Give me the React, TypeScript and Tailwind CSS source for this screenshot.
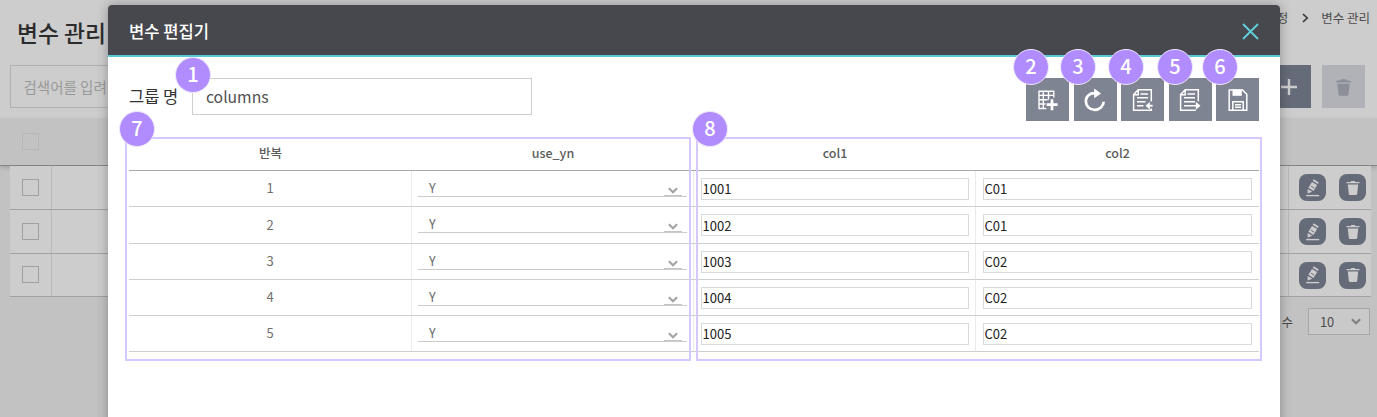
import React from "react";

const rows = [
  { n: 1, yn: "Y", col1: "1001", col2: "C01" },
  { n: 2, yn: "Y", col1: "1002", col2: "C01" },
  { n: 3, yn: "Y", col1: "1003", col2: "C02" },
  { n: 4, yn: "Y", col1: "1004", col2: "C02" },
  { n: 5, yn: "Y", col1: "1005", col2: "C02" },
];

function Badge({ n, className }: { n: number; className: string }) {
  return (
    <span
      className={
        "absolute flex h-9 w-9 items-center justify-center rounded-full border border-[#eee8ff] bg-[#b18cff] pb-[3px] text-[20px] font-medium leading-none text-white " +
        className
      }
    >
      {n}
    </span>
  );
}

function GridAddIcon() {
  return (
    <svg width="22" height="22" viewBox="0 0 22 22" fill="none" stroke="#fff" strokeWidth="1.4">
      <path d="M16.8 8.6V2.2H2v17.3h7.2M2 6.4h14.8M2 10.7h8.5M2 15h6.5M6.3 2.2v17.3M11.5 2.2v8.5" />
      <path d="M15 10.2v11M9.6 15.7H20.6" strokeWidth="2.7" />
    </svg>
  );
}

function ReloadIcon() {
  return (
    <svg width="24" height="26" viewBox="0 0 24 26" fill="none">
      <path d="M12.8 6.2C6.6 5.6 2.8 9.5 2.8 14.1c0 5 4 8.8 8.8 8.8 4.9 0 8.9-3.6 9.1-8.2" stroke="#fff" strokeWidth="2.7" />
      <path d="M11.2 1.4 18 6.6l-6.8 4.6z" fill="#fff" />
    </svg>
  );
}

function ImportIcon() {
  return (
    <svg width="22" height="24" viewBox="0 0 22 24" fill="none" stroke="#fff" strokeWidth="1.5">
      <path d="M19.3 13.5V1.8H6.2L1.6 6.6v15.6h17.7v-1.6M6.2 2v4.8H1.8M8.5 6h7.5M5 9.8h11M5 13.8h8.5M5 17.8h6.5" />
      <path d="M20.6 17.7h-4" strokeWidth="2" />
      <path d="M17.8 13.9v7.6l-4.3-3.8z" fill="#fff" stroke="none" />
    </svg>
  );
}

function ExportIcon() {
  return (
    <svg width="22" height="24" viewBox="0 0 22 24" fill="none" stroke="#fff" strokeWidth="1.5">
      <path d="M19.3 13.2V1.8H6.2L1.6 6.6v15.6h15.2M6.2 2v4.8H1.8M8.5 6h7.5M5 9.8h11M5 13.8h11M5 17.8h12" />
      <path d="M16.8 13.7v8l4.7-4z" fill="#fff" stroke="none" />
    </svg>
  );
}

function SaveIcon() {
  return (
    <svg width="20" height="24" viewBox="0 0 20 24" fill="none" stroke="#fff" strokeWidth="1.5">
      <path d="M1.2 1.9h13.4l4.2 4.3v16H1.2z" />
      <path d="M4.5 1.5h9.3v6.3H4.5z" fill="#fff" stroke="none" />
      <path d="M4.8 22.2v-8.4h10.4v8.4M7 16.7h6M7 19.3h6" />
    </svg>
  );
}

function TrashIcon({ size, color }: { size: number; color: string }) {
  return (
    <svg width={size} height={size} viewBox="0 0 18 18" fill={color}>
      <path d="M1 2.4C3 1.8 5.2 1.5 6 1.4L6.6.3h4.8l.6 1.1c.8.1 3 .4 5 1v1.2H1z" />
      <path d="M2.4 5h13.2l-1.4 11.4q-.2 1.3-1.5 1.3H5.3q-1.3 0-1.5-1.3z" />
    </svg>
  );
}

function RowTrashIcon() {
  return (
    <svg width="14" height="16" viewBox="0 0 14 16" fill="#cdcdcd">
      <path d="M.5 2h4.2l.5-1h3.6l.5 1h4.2v1.3H.5z" />
      <path d="M1.8 4.4h10.4l-1 9.4q-.1 1.2-1.3 1.2H4.1q-1.2 0-1.3-1.2z" />
    </svg>
  );
}

function PencilIcon() {
  return (
    <svg width="16" height="18" viewBox="0 0 16 18" fill="#cdcdcd">
      <path d="m7.7 1.8 1-1.5 5.1 3.1-1 1.6z" />
      <path d="m7 3 5.1 3.1-3.6 5.8-5.1-3.1z" />
      <path d="m2.7 9.9 4.6 2.8-4.7 1.9z" />
      <path d="M1.2 15.9h13v1.4h-13z" />
      <path d="m6.1 7.2 3 1.9" stroke="#666b79" strokeWidth="1" />
    </svg>
  );
}

function Chevron({ className }: { className: string }) {
  return (
    <svg className={className} width="10" height="7" viewBox="0 0 10 7" fill="none" stroke="currentColor" strokeWidth="2.2">
      <path d="m.9 1.2 4.1 4 4.1-4" />
    </svg>
  );
}

function ToolButton({ children, label }: { children: React.ReactNode; label: string }) {
  return (
    <button aria-label={label} className="flex h-[43px] w-[43px] items-center justify-center bg-[#7f8493]">
      {children}
    </button>
  );
}

function Backdrop() {
  return (
    <div className="flex h-full flex-col bg-[#c2c2c2] text-[#4b4b4b]">
      <div className="flex h-[118px] flex-col bg-[#cdcdcd]">
        <div className="flex h-[65px] items-start justify-between pl-[17px] pr-[7px]">
          <h1 className="mt-[17px] text-[22.8px] font-medium leading-[32px] text-[#2c2c2c]">변수 관리</h1>
          <div className="mt-[9px] flex items-center text-[12.5px] leading-[18px]">
            <span>정</span>
            <svg className="ml-[14px] mr-[12px]" width="7" height="10" viewBox="0 0 7 10" fill="none" stroke="#3a3a3a" strokeWidth="1.7">
              <path d="m1 1 4.2 4L1 9" />
            </svg>
            <span>변수 관리</span>
          </div>
        </div>
        <div className="flex justify-between pl-[9.5px] pr-3">
          <div className="flex h-[43px] w-[260px] items-center border border-[#b0b0b0] pl-[13px] text-[14.5px] text-[#999]">
            <span className="whitespace-nowrap">검색어를 입려</span>
          </div>
          <div className="flex gap-[11px]">
            <div className="flex h-[43px] w-[43px] items-center justify-center bg-[#666b79]">
              <svg className="-ml-px" width="16" height="16" viewBox="0 0 16 16" stroke="#cdcdcd" strokeWidth="2.4">
                <path d="M8 0v16M0 8h16" />
              </svg>
            </div>
            <div className="flex h-[43px] w-[43px] items-center justify-center bg-[#b1b2b8] pt-0.5">
              <TrashIcon size={17} color="#8c8e98" />
            </div>
          </div>
        </div>
      </div>
      <div className="flex h-[48px] items-center border-b border-[#858585] pl-[22px] shadow-[0_2px_4px_rgba(0,0,0,0.15)]">
        <span className="h-[17px] w-[17px] border border-[#b7b7b7]" />
      </div>
      <div className="ml-[9.5px] mr-[6.5px] flex flex-col">
        {[0, 1, 2].map((i) => (
          <div key={i} className="flex h-[43.8px] border-b border-[#a2a2a2] bg-[#cdcdcd]">
            <div className="flex w-[42px] items-center border-r border-[#bababa] pl-[12.5px]">
              <span className="h-[17px] w-[17px] border border-[#a0a0a0]" />
            </div>
            <div className="flex-1" />
            <div className="flex w-[83px] items-center gap-[13px] border-l border-[#bababa] pl-[10.5px] pt-px">
              <span className="flex h-[27px] w-[27px] items-center justify-center rounded-[8px] bg-[#666b79]">
                <PencilIcon />
              </span>
              <span className="flex h-[27px] w-[27px] items-center justify-center rounded-[8px] bg-[#666b79]">
                <RowTrashIcon />
              </span>
            </div>
          </div>
        ))}
      </div>
      <div className="mt-[11px] flex items-center justify-end gap-[15px] pr-[7px] text-[12.5px]">
        <span>수</span>
        <div className="flex h-[27px] w-[62px] items-center justify-between border border-[#a6a6a6] bg-[#c9c9c9] pl-[11px] pr-[8px] text-[12.8px]">
          <span>10</span>
          <Chevron className="text-[#808080]" />
        </div>
      </div>
    </div>
  );
}

function Editor() {
  return (
    <div className="absolute left-[108px] top-[5px] flex h-[440px] w-[1172px] flex-col rounded-t-[4px] bg-white shadow-[0_0_12px_rgba(0,0,0,0.3)]">
      <div className="flex h-[52px] items-center justify-between rounded-t-[4px] border-b-2 border-[#55ccd6] bg-[#47474e] pl-[21px] pr-[21px]">
        <h2 className="pt-[3px] text-[16.6px] font-medium text-white">변수 편집기</h2>
        <svg className="mt-[3px]" width="17" height="17" viewBox="0 0 17 17" stroke="#5fd0da" strokeWidth="1.8">
          <path d="m1 1 15 15M16 1 1 16" />
        </svg>
      </div>
      <div className="flex h-[80px] items-start justify-between pl-[21px] pr-[21px] pt-[21px]">
        <div className="flex items-center">
          <span className="w-[63px] text-[16.5px] text-[#333]">그룹 명</span>
          <div className="flex h-[37px] w-[340px] items-center border border-[#cfcfcf] pl-[13px] text-[15.7px] leading-[23px] text-[#505050]">
            columns
          </div>
        </div>
        <div className="flex gap-[4.5px]">
          <ToolButton label="add column"><GridAddIcon /></ToolButton>
          <ToolButton label="reload"><ReloadIcon /></ToolButton>
          <ToolButton label="import"><ImportIcon /></ToolButton>
          <ToolButton label="export"><ExportIcon /></ToolButton>
          <ToolButton label="save"><SaveIcon /></ToolButton>
        </div>
      </div>
      <div className="ml-[21px] w-[1130px]">
        <div className="grid h-[34px] grid-cols-[283px_282px_282px_283px] items-center border-b border-[#a8a8a8] text-center text-[12.5px] font-medium text-[#5c5c5c]">
          <span>반복</span>
          <span>use_yn</span>
          <span>col1</span>
          <span>col2</span>
        </div>
        {rows.map((r) => (
          <div key={r.n} className="grid h-[36.25px] grid-cols-[283px_282px_282px_283px] border-b border-[#cfcfcf] text-[13px]">
            <div className="flex items-center justify-center border-r border-[#ebebeb] pb-px text-[#6f6f6f]">{r.n}</div>
            <div className="border-r border-[#ebebeb] pl-[6px] pr-[6px]">
              <div className="flex h-[26px] items-center justify-between border-b border-[#cccccc] pl-[11px] pr-[5px] text-[#6a6a6a]">
                <span className="pt-[10px] text-[12.5px]">{r.yn}</span>
                <span className="flex h-[25px] w-[18px] items-end justify-center border-b border-[#c4c4c4] pb-px">
                  <Chevron className="text-[#a4a4a4]" />
                </span>
              </div>
            </div>
            <div className="flex items-center border-r border-[#ebebeb] pl-[6.5px] pr-[6.5px] pt-px">
              <div className="flex h-[22px] w-full items-center border border-[#dadada] pl-px text-[#222]">{r.col1}</div>
            </div>
            <div className="flex items-center pl-[6.5px] pr-[7px] pt-px">
              <div className="flex h-[22px] w-full items-center border border-[#dadada] pl-px text-[#222]">{r.col2}</div>
            </div>
          </div>
        ))}
      </div>
    </div>
  );
}

export default function App() {
  return (
    <div className="relative h-[417px] w-[1377px] overflow-hidden font-['Noto_Sans_CJK_KR',sans-serif]">
      <Backdrop />
      <Editor />
      <div className="absolute left-[125px] top-[137px] h-[224px] w-[566px] border-2 border-[#d5c8ff]" />
      <div className="absolute left-[696px] top-[137px] h-[224px] w-[566px] border-2 border-[#d5c8ff]" />
      <Badge n={1} className="left-[175px] top-[57px]" />
      <Badge n={2} className="left-[1013px] top-[49px]" />
      <Badge n={3} className="left-[1060px] top-[49px]" />
      <Badge n={4} className="left-[1108px] top-[49px]" />
      <Badge n={5} className="left-[1157px] top-[49px]" />
      <Badge n={6} className="left-[1202px] top-[49px]" />
      <Badge n={7} className="left-[119px] top-[111px]" />
      <Badge n={8} className="left-[692px] top-[111px]" />
    </div>
  );
}
